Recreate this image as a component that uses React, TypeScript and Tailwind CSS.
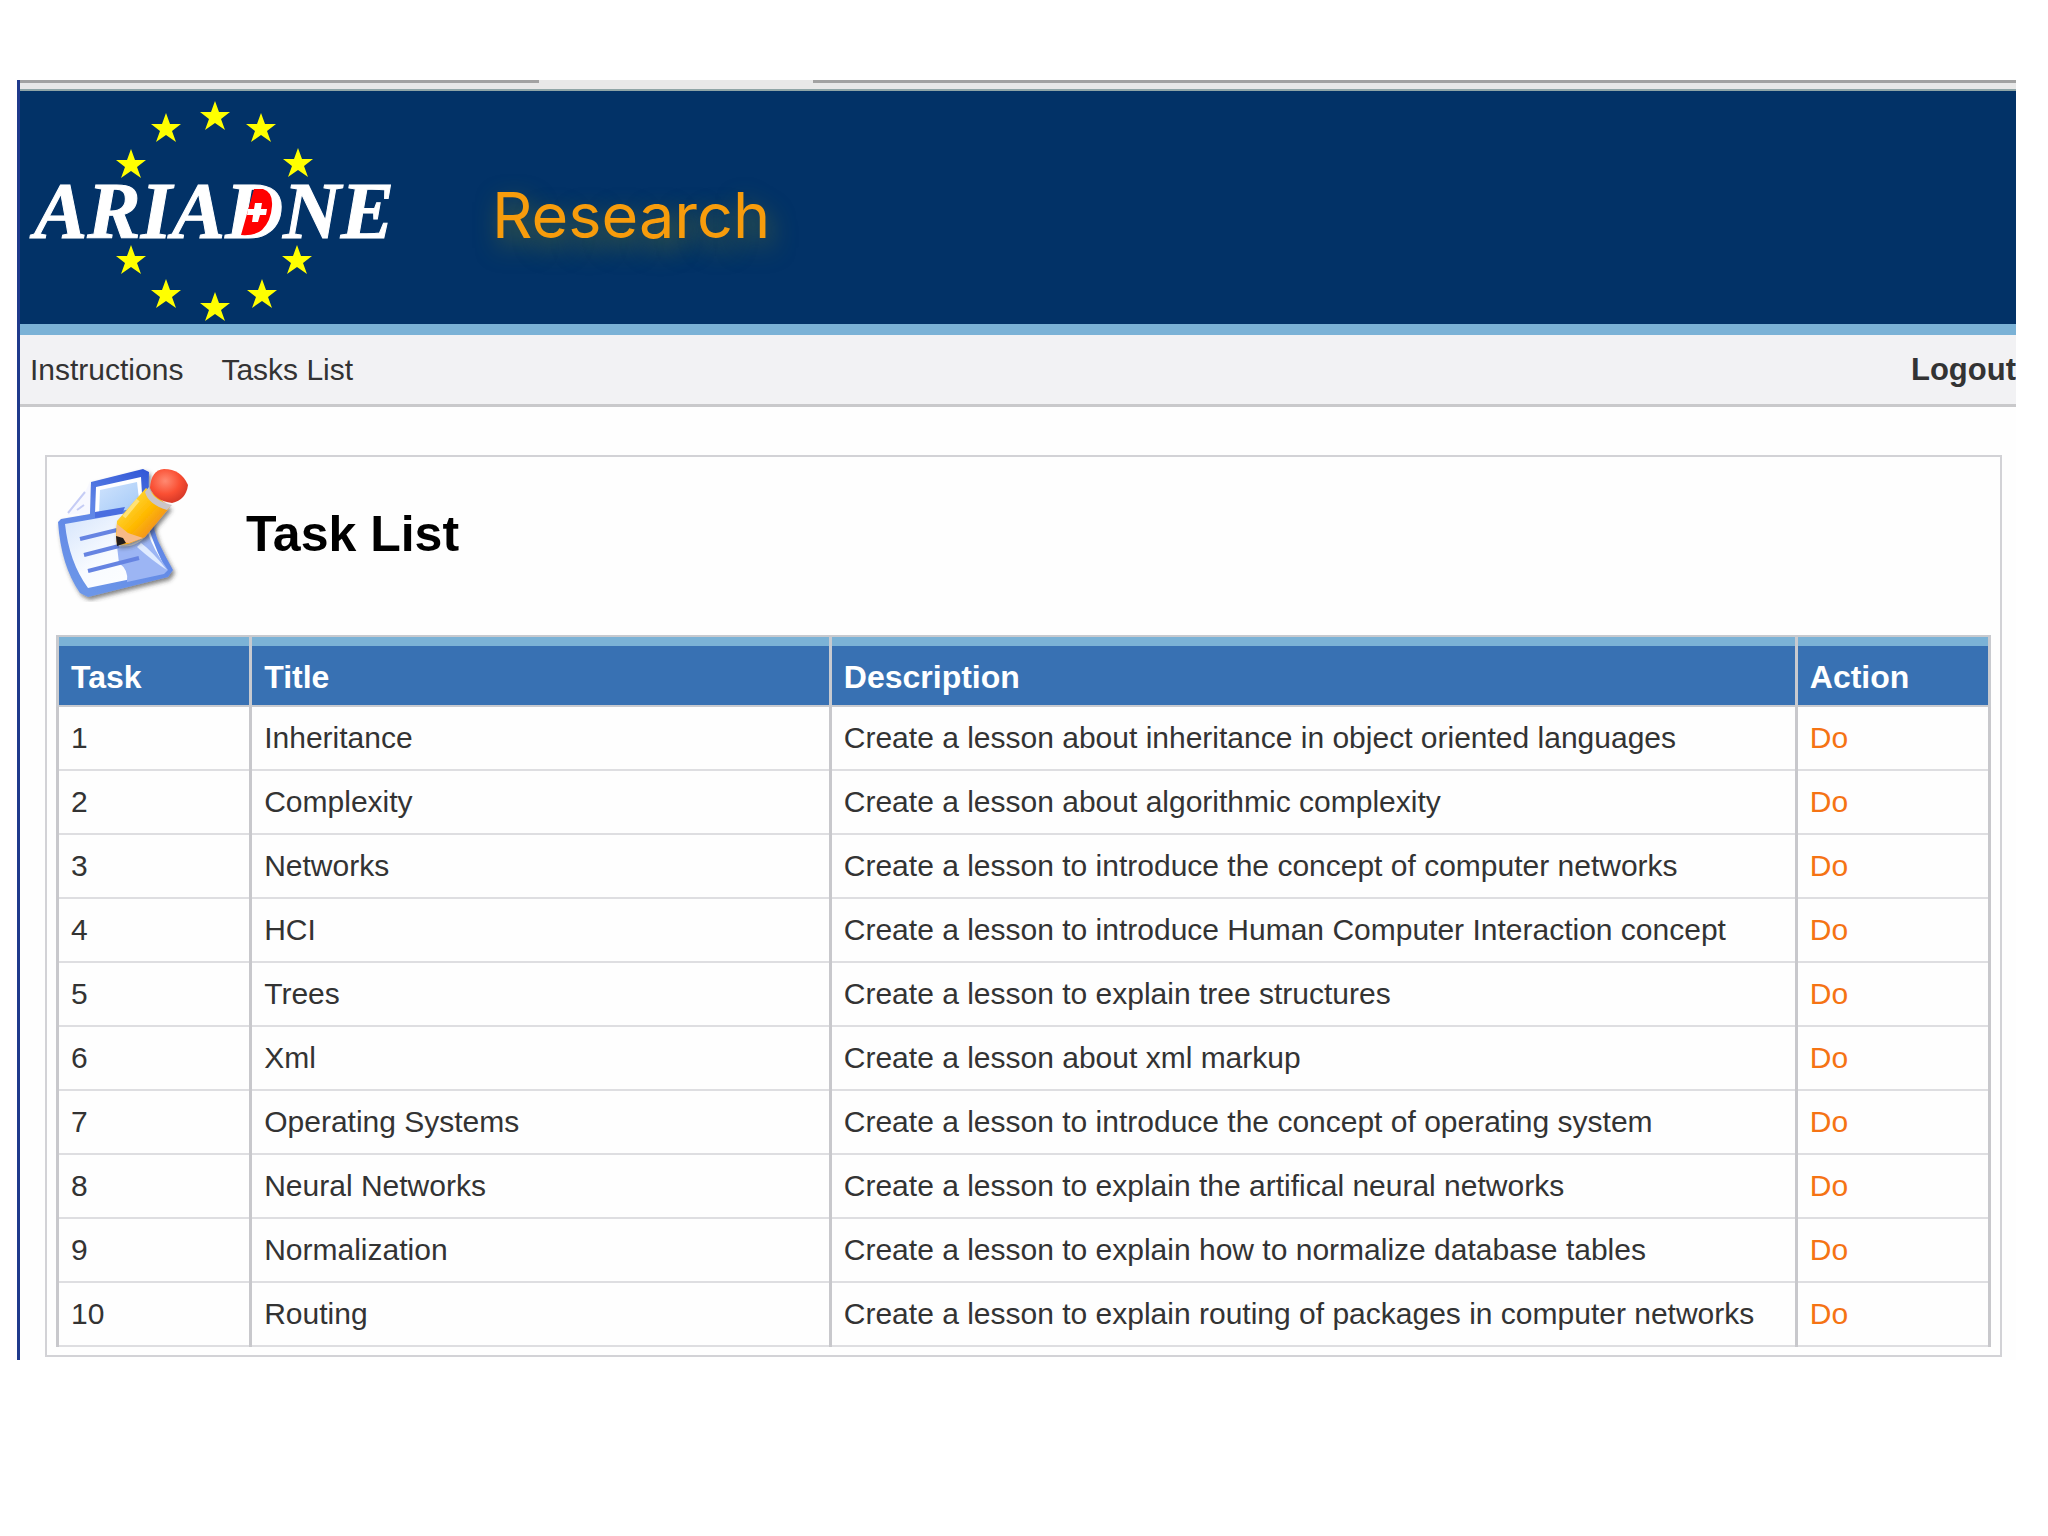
const STARS: [number, number][] = [
  [215, 117],
  [166, 129],
  [261, 129],
  [131, 165],
  [298, 164],
  [131, 261],
  [297, 261],
  [166, 295],
  [262, 295],
  [215, 308],
];

const STAR_POINTS =
  "0,-16 4,-5 15,-5 6,2 10,13 0,6 -10,13 -6,2 -15,-5 -4,-5";

const TASKS = [
  { title: "Inheritance", description: "Create a lesson about inheritance in object oriented languages" },
  { title: "Complexity", description: "Create a lesson about algorithmic complexity" },
  { title: "Networks", description: "Create a lesson to introduce the concept of computer networks" },
  { title: "HCI", description: "Create a lesson to introduce Human Computer Interaction concept" },
  { title: "Trees", description: "Create a lesson to explain tree structures" },
  { title: "Xml", description: "Create a lesson about xml markup" },
  { title: "Operating Systems", description: "Create a lesson to introduce the concept of operating system" },
  { title: "Neural Networks", description: "Create a lesson to explain the artifical neural networks" },
  { title: "Normalization", description: "Create a lesson to explain how to normalize database tables" },
  { title: "Routing", description: "Create a lesson to explain routing of packages in computer networks" },
];

function AriadneLogo() {
  return (
    <svg viewBox="20 91 380 233" className="h-[233px] w-[380px] shrink-0" role="img" aria-label="ARIADNE">
      {STARS.map(([x, y]) => (
        <polygon key={`${x}-${y}`} points={STAR_POINTS} transform={`translate(${x} ${y})`} fill="#ffff00" />
      ))}
      <text
        x="34"
        y="238"
        fontSize="80"
        fontWeight="700"
        fontStyle="italic"
        fill="#ffffff"
        stroke="#ffffff"
        strokeWidth="1"
        className="font-['Liberation_Serif',serif]"
      >
        ARIADNE
      </text>
      <path d="M254 189 H263 Q273 192 272 206 Q271 221 262 230 Q255 236 241 235 Z" fill="#ff0000" />
      <path d="M255 203 h7 l-1 6 h6 l-1 6 h-6 l-2 7 h-6 l1 -7 h-6 l1 -6 h6 Z" fill="#ffffff" />
    </svg>
  );
}

function TaskIcon() {
  return (
    <svg viewBox="56 466 136 136" className="h-[136px] w-[136px] shrink-0" aria-hidden="true">
      <defs>
        <linearGradient id="edge" x1="0.8" y1="0" x2="0.4" y2="1">
          <stop offset="0" stopColor="#2f55d6" />
          <stop offset="0.4" stopColor="#5f84e6" />
          <stop offset="1" stopColor="#6c96e8" />
        </linearGradient>
        <linearGradient id="sheet" x1="0" y1="0" x2="1" y2="1">
          <stop offset="0" stopColor="#d3e3fc" />
          <stop offset="0.5" stopColor="#f8fbff" />
          <stop offset="1" stopColor="#ffffff" />
        </linearGradient>
        <linearGradient id="back" x1="0" y1="0" x2="1" y2="1">
          <stop offset="0" stopColor="#cfe3fd" />
          <stop offset="1" stopColor="#a3c9f7" />
        </linearGradient>
        <linearGradient id="body" x1="0" y1="0" x2="1" y2="1">
          <stop offset="0.2" stopColor="#ffd83a" />
          <stop offset="0.5" stopColor="#ffb900" />
          <stop offset="0.8" stopColor="#ee8628" />
        </linearGradient>
        <radialGradient id="eraser" cx="0.4" cy="0.35" r="0.65">
          <stop offset="0" stopColor="#ff8a72" />
          <stop offset="0.6" stopColor="#fa4f33" />
          <stop offset="1" stopColor="#d93a28" />
        </radialGradient>
        <filter id="shade" x="-20%" y="-20%" width="140%" height="140%">
          <feDropShadow dx="2" dy="3" stdDeviation="2" floodColor="#333333" floodOpacity="0.6" />
        </filter>
      </defs>
      <g filter="url(#shade)">
        <path d="M91 482 L143 469 L149 472 Q147 512 158 541 Q165 556 173 570 L168 577 L88 597 L80 593 Q61 566 58 522 L61 519 L90 514 Z" fill="url(#edge)" />
      </g>
      <path d="M67 515 L86 490 L90 482 L90 513 Z" fill="#f7f8ff" />
      <path d="M68 513 L85 492 M77 510 L84 505" stroke="#c5ccf5" strokeWidth="2" fill="none" />
      <path d="M96 487 L141 477 Q142 495 143 507 L95 514 Z" fill="#ffffff" />
      <path d="M100 490 L137 482 L140 508 L99 514 Z" fill="url(#back)" />
      <path d="M95 512 L125 507 L122 514 L95 518 Z" fill="#4a6ee0" />
      <path d="M65 524 Q105 517 144 510 Q149 535 165 568 L160 573 L88 588 Q69 562 65 524 Z" fill="url(#sheet)" />
      <path d="M117 546 Q138 549 148 533 Q153 549 168 570 L164 574 L127 582 Q129 570 119 563 Z" fill="#9cb5f4" />
      <path d="M141 543 Q152 551 167 570 Q154 562 137 547 Z" fill="#e0ebff" />
      <path d="M80 539 L117 530 M84 555 L119 546 M88 571 L139 558" stroke="#6684e2" strokeWidth="4" />
      <g filter="url(#shade)">
        <path d="M117 521 L146 488 L170 507 L145 537 L128 544 L117 545 L116 535 Z" fill="url(#body)" />
      </g>
      <path d="M117 524 L128 533 L143 538 L129 543 L116 542 Z" fill="#f7ba86" />
      <path d="M116 536 L123 538 L126 543 L117 546 Z" fill="#211c1a" />
      <path d="M138 500 L124 517" stroke="#ffe276" strokeWidth="4" />
      <path d="M149 487 Q152 500 172 505 L167 510 Q148 504 145 492 Z" fill="#cbc5c8" />
      <path d="M150 488 Q151 470 164 469 Q181 469 188 485 Q186 500 172 503 Q155 501 150 488 Z" fill="url(#eraser)" />
    </svg>
  );
}

export default function App() {
  return (
    <div className="min-h-screen bg-white pt-20 pr-8 pl-[17px] font-['Liberation_Sans',Arial,sans-serif] text-[30px] leading-9 text-[#333333]">
      <div className="overflow-hidden border-l-[3px] border-[#1f3a8c] bg-[#fefefe] pb-[3px]">
        <div className="flex h-[11px] border-b-2 border-[#8fa5a6] bg-[#e8e8e8]">
          <div className="h-[3px] w-[26%] bg-[#a2a2a2]" />
          <div className="w-[274px]" />
          <div className="h-[3px] flex-1 bg-[#a2a2a2]" />
        </div>

        <header className="flex items-center gap-[92px] border-b-[11px] border-[#7bb2d6] bg-[#023267]">
          <AriadneLogo />
          <span className="pt-3.5 font-[Inter,sans-serif] text-[63px] leading-[80px] font-normal text-[#f79c0c] [text-shadow:4px_10px_24px_rgba(120,130,30,0.7)]">
            Research
          </span>
        </header>

        <nav className="flex h-[72px] items-center gap-[38px] border-b-[3px] border-[#c9c9cb] bg-[#f2f2f4] pl-2.5">
          <a href="#instructions">Instructions</a>
          <a href="#tasks">Tasks List</a>
          <a href="#logout" className="ml-auto text-[31px] font-bold">
            Logout
          </a>
        </nav>

        <main className="mt-12 mr-3.5 ml-[25px] border-2 border-[#d2d2d6] px-[9px] pb-2">
          <div className="flex h-[178px] items-start gap-[54px] pt-[9px]">
            <TaskIcon />
            <h1 className="pt-[38px] text-[50px] leading-[60px] font-bold text-black">Task List</h1>
          </div>

          <table className="w-full table-fixed border-collapse text-left">
            <colgroup>
              <col className="w-[10%]" />
              <col className="w-[30%]" />
              <col className="w-[50%]" />
              <col className="w-[10%]" />
            </colgroup>
            <thead>
              <tr className="h-[70px] bg-[#3871b3] text-[32px] text-white">
                {["Task", "Title", "Description", "Action"].map((name) => (
                  <th
                    key={name}
                    scope="col"
                    className="border-x-[3px] border-y-2 border-[#c8cacf] px-3 pt-3 font-bold shadow-[inset_0_9px_0_#7bb2d6]"
                  >
                    {name}
                  </th>
                ))}
              </tr>
            </thead>
            <tbody>
              {TASKS.map((task, i) => (
                <tr key={task.title} className="h-16">
                  <td className="border-x-[3px] border-b-2 border-x-[#c8c8cc] border-b-[#dedee1] px-3">{i + 1}</td>
                  <td className="border-x-[3px] border-b-2 border-x-[#c8c8cc] border-b-[#dedee1] px-3">{task.title}</td>
                  <td className="border-x-[3px] border-b-2 border-x-[#c8c8cc] border-b-[#dedee1] px-3 whitespace-nowrap">
                    {task.description}
                  </td>
                  <td className="border-x-[3px] border-b-2 border-x-[#c8c8cc] border-b-[#dedee1] px-3">
                    <a href={`#task-${i + 1}`} className="text-[#f57314]">
                      Do
                    </a>
                  </td>
                </tr>
              ))}
            </tbody>
          </table>
        </main>
      </div>
    </div>
  );
}
